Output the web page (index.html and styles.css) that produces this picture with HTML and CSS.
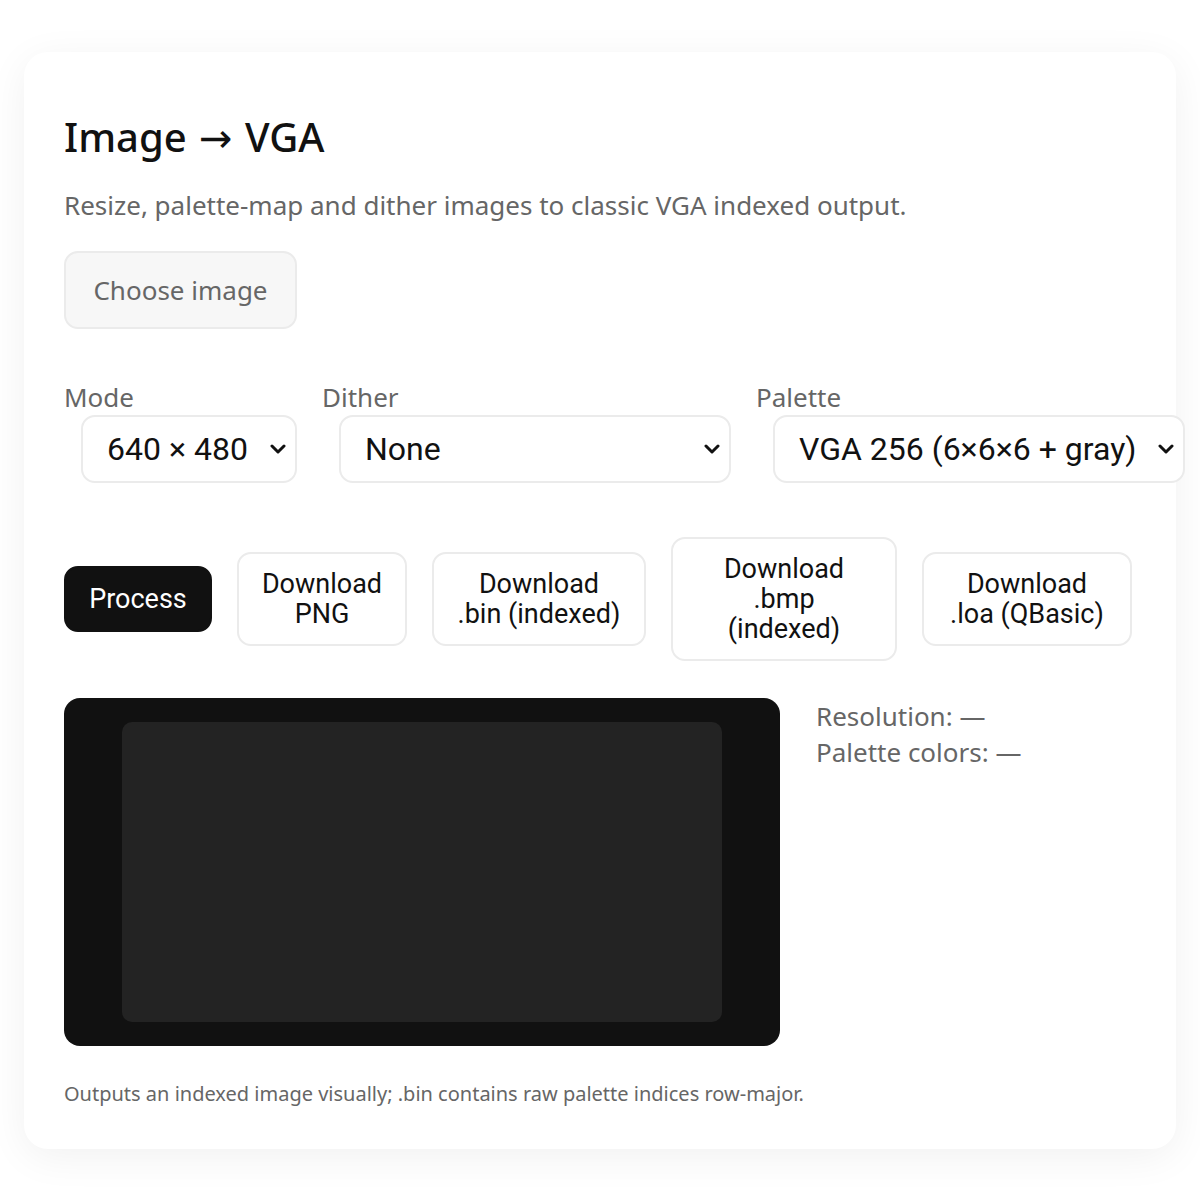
FILE: index.html
```html
<!DOCTYPE html>
<html lang="en">
<head>
  <meta charset="UTF-8">
  <title>Image → VGA</title>
  <link rel="stylesheet" href="styles.css">
</head>
<body>
<div class="card">
  <h1>Image <span class="arrow">→</span> VGA</h1>
  <p class="lead">Resize, palette-map and dither images to classic VGA indexed output.</p>

  <button class="choose">Choose image</button>

  <div class="fields">
    <label class="field">
      <span>Mode</span>
      <select class="sel-mode">
        <option>640 × 480</option>
        <option>320 × 200</option>
      </select>
    </label>
    <label class="field">
      <span>Dither</span>
      <select class="sel-dither">
        <option>None</option>
        <option>Floyd–Steinberg</option>
        <option>Ordered (Bayer 4×4)</option>
      </select>
    </label>
    <label class="field">
      <span>Palette</span>
      <select class="sel-palette">
        <option>VGA 256 (6×6×6 + gray)</option>
        <option>EGA 16</option>
      </select>
    </label>
  </div>

  <div class="actions">
    <button class="btn primary">Process</button>
    <button class="btn btn-png">Download<br>PNG</button>
    <button class="btn btn-bin">Download<br>.bin (indexed)</button>
    <button class="btn btn-bmp">Download<br>.bmp<br>(indexed)</button>
    <button class="btn btn-loa">Download<br>.loa (QBasic)</button>
  </div>

  <div class="preview">
    <div class="screen">
      <div class="canvas"></div>
    </div>
    <div class="info">
      <div>Resolution: —</div>
      <div>Palette colors: —</div>
    </div>
  </div>

  <p class="note">Outputs an indexed image visually; .bin contains raw palette indices row-major.</p>
</div>
</body>
</html>
```

FILE: styles.css
```css
* {
  box-sizing: border-box;
}

body {
  margin: 0;
  padding: 52px 24px;
  background: #fff;
  font-family: "Noto Sans", sans-serif;
  color: #111;
}

.card {
  background: #fff;
  border-radius: 24px;
  padding: 40px 40px 42px;
  box-shadow: 0 8px 40px rgba(0, 0, 0, 0.06);
}

h1 {
  margin: 20px 0 0;
  font-size: 40px;
  line-height: 50px;
  font-weight: 500;
}

h1 .arrow {
  margin: 0 2px;
  font-family: "DejaVu Sans", sans-serif;
  font-weight: 400;
  line-height: 1;
}

.lead {
  margin: 25px 0 0;
  font-size: 26px;
  line-height: 36px;
  color: #666;
}

.choose {
  display: block;
  margin-top: 28px;
  width: 233px;
  height: 78px;
  background: #f7f7f7;
  border: 2px solid #ebebeb;
  border-radius: 14px;
  font-family: "Noto Sans", sans-serif;
  font-size: 26px;
  color: #666;
}

.fields {
  display: flex;
  gap: 25px;
  margin-top: 50px;
}

.field {
  display: block;
  font-size: 26px;
  line-height: 36px;
  color: #666;
}

.field span {
  display: block;
}

/* native arrow is too small, draw the chevron ourselves */
.field select {
  display: block;
  margin-left: 17px;
  height: 68px;
  padding: 0 40px 0 24px;
  -webkit-appearance: none;
  appearance: none;
  background: #fff url("data:image/svg+xml,%3Csvg xmlns='http://www.w3.org/2000/svg' width='16' height='10' viewBox='0 0 16 10'%3E%3Cpath d='M2 2l6 6 6-6' fill='none' stroke='%23111' stroke-width='3' stroke-linecap='round' stroke-linejoin='round'/%3E%3C/svg%3E") no-repeat right 9px center;
  border: 2px solid #ebebeb;
  border-radius: 14px;
  font-family: Roboto, sans-serif;
  font-size: 32px;
  color: #111;
}

.sel-mode {
  width: 216px;
}

.sel-dither {
  width: 392px;
}

.sel-palette {
  width: 412px;
}

.actions {
  display: flex;
  align-items: center;
  gap: 25px;
  margin-top: 54px;
}

.btn {
  flex: none;
  padding: 15px 8px;
  background: #fff;
  border: 2px solid #ebebeb;
  border-radius: 14px;
  font-family: Roboto, sans-serif;
  font-size: 27px;
  line-height: 30px;
  color: #111;
}

.btn.primary {
  width: 148px;
  padding: 16px 8px;
  background: #111;
  border-color: #111;
  color: #fff;
}

.btn-png {
  width: 170px;
}

.btn-bin {
  width: 214px;
}

.btn-bmp {
  width: 226px;
}

.btn-loa {
  width: 210px;
}

.preview {
  display: flex;
  align-items: flex-start;
  gap: 36px;
  margin-top: 37px;
}

.screen {
  width: 716px;
  height: 348px;
  padding: 24px 58px;
  background: #111;
  border-radius: 16px;
}

.canvas {
  width: 600px;
  height: 300px;
  background: #232323;
  border-radius: 10px;
}

.info {
  font-size: 26px;
  line-height: 36px;
  color: #666;
}

.note {
  margin: 34px 0 0;
  font-size: 20px;
  line-height: 27px;
  color: #666;
}
```
